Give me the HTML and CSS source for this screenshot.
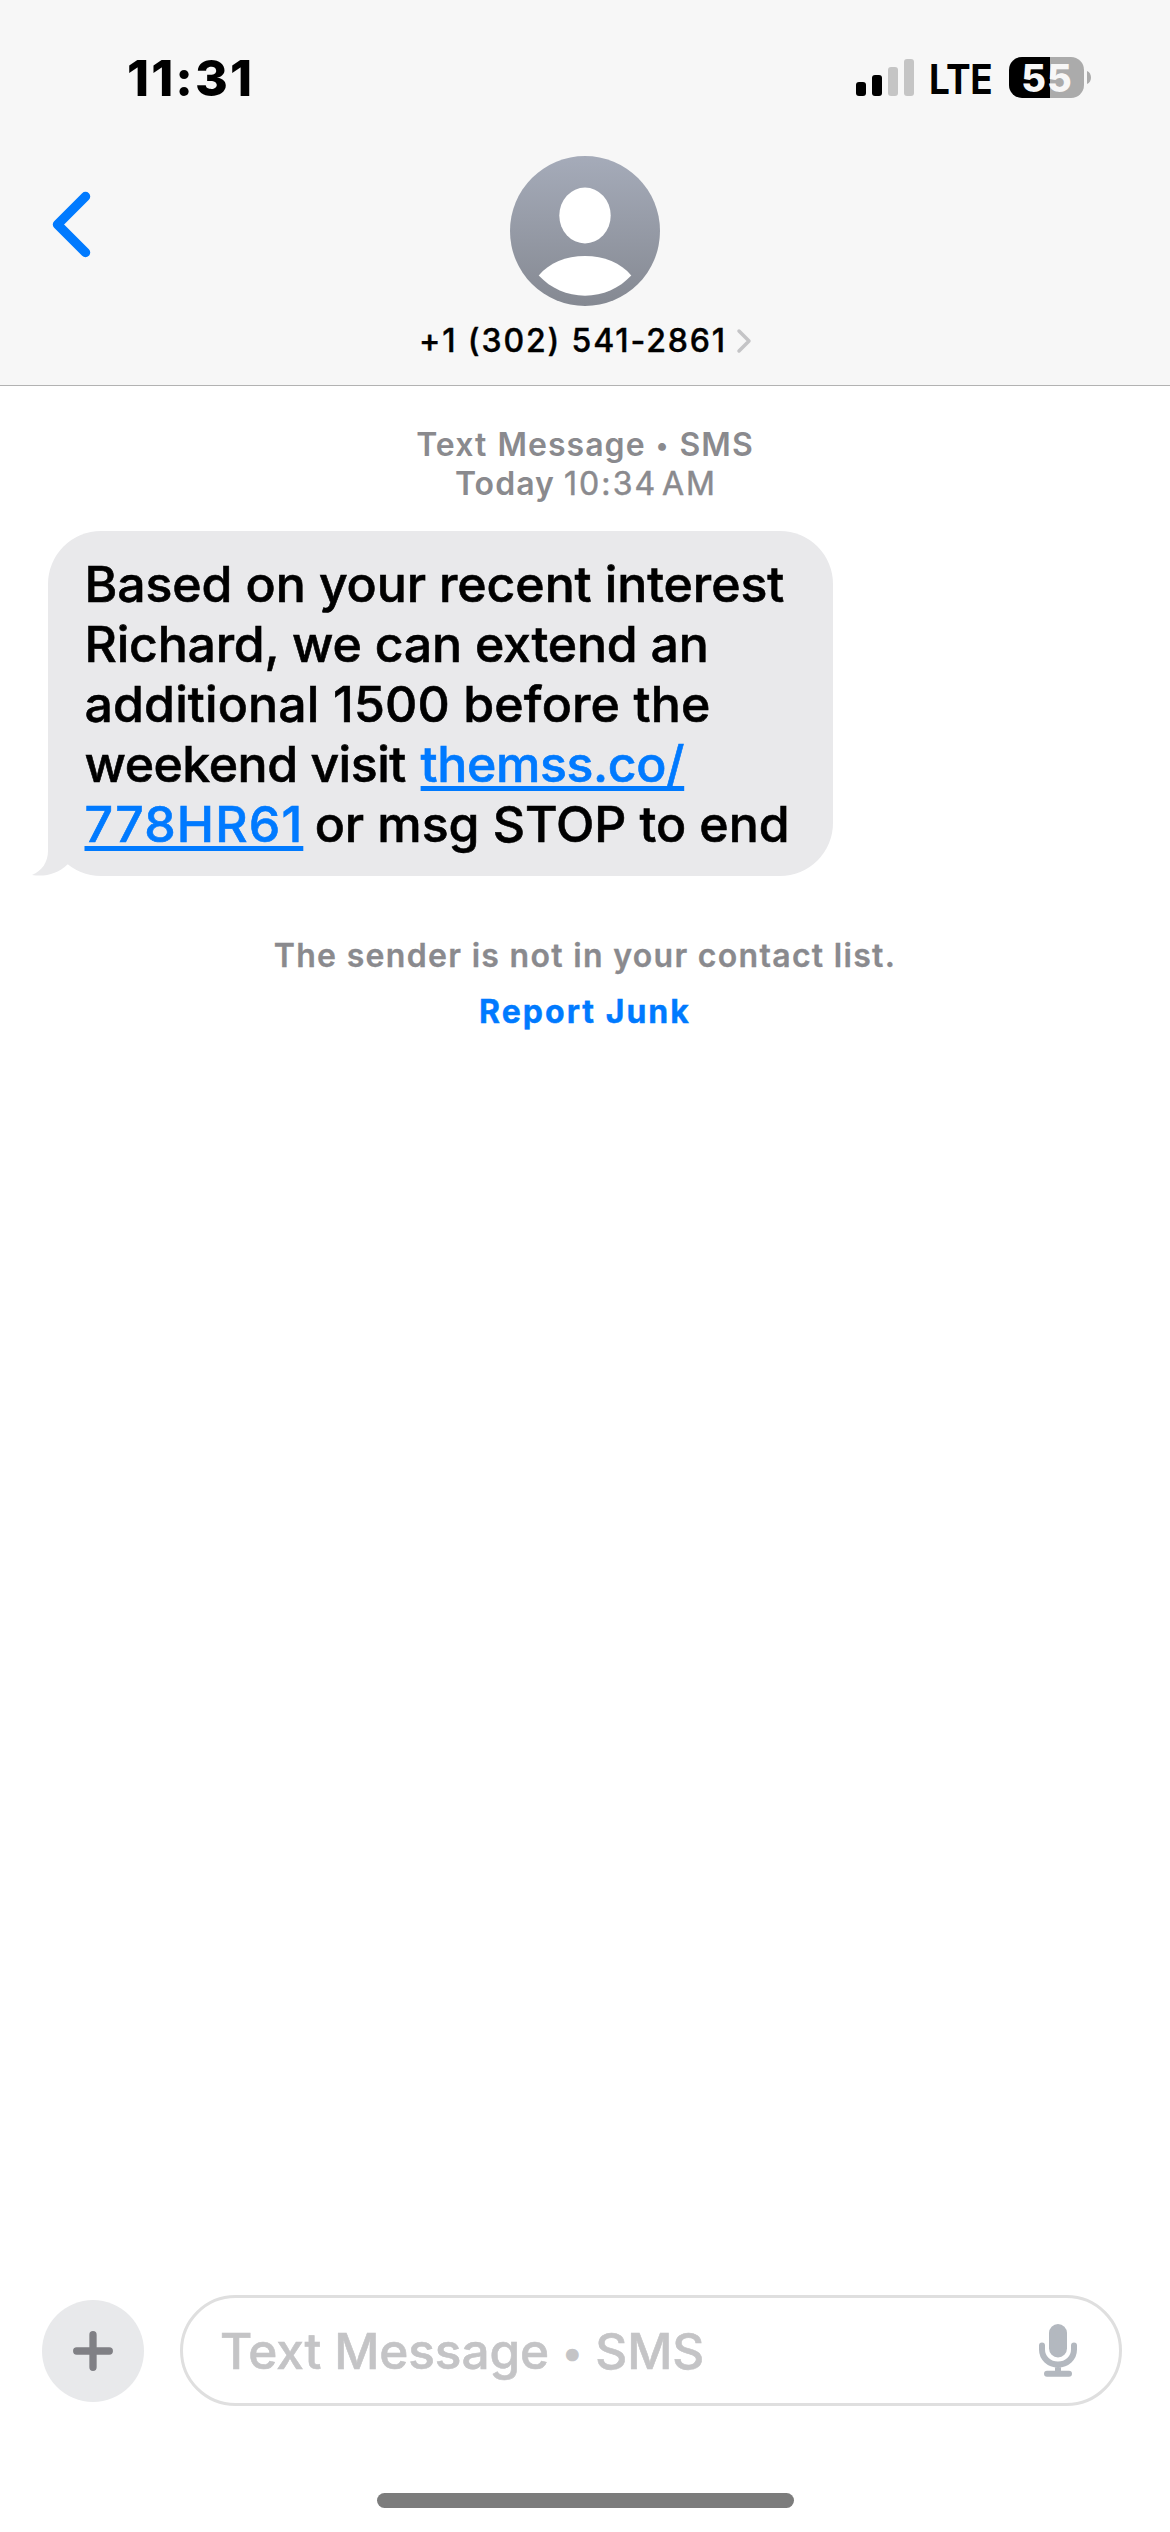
FILE: index.html
```html
<!DOCTYPE html>
<html lang="en">
<head>
<meta charset="utf-8">
<title>Messages</title>
<link rel="stylesheet" href="styles.css">
</head>
<body>
<div class="screen">
  <header class="header">
    <div class="status">
      <span class="time">11:31</span>
      <div class="indicators">
        <svg class="signal" viewBox="0 0 58 37"><g><rect y="23" width="10" height="14" rx="3"/><rect x="16" y="16" width="10" height="21" rx="3"/></g><g class="signal-off"><rect x="32" y="8" width="10" height="29" rx="3"/><rect x="48" width="10" height="37" rx="3"/></g></svg>
        <span class="network">LTE</span>
        <div class="battery"><span class="battery-level">55</span></div>
        <svg class="battery-tip" viewBox="0 0 4 13"><path d="M0 0C5.3 2 5.3 11 0 13Z"/></svg>
      </div>
    </div>
    <div class="contact-bar">
      <svg class="back" viewBox="0 0 40 68"><path d="M34.5 5.5 6.5 33.5 34.5 61.5"/></svg>
      <div class="contact">
        <svg class="avatar" viewBox="0 0 150 150">
          <defs><linearGradient id="avatar-fill" x1="0" y1="0" x2="0" y2="1"><stop offset="0" stop-color="#a5abb9"/><stop offset="1" stop-color="#858992"/></linearGradient></defs>
          <circle cx="75" cy="75" r="75" fill="url(#avatar-fill)"/>
          <ellipse cx="75" cy="59.5" rx="25.7" ry="28" fill="#fff"/>
          <path d="M28.7 119.5C39 107 56 100 75 100s36 7 46.300 19.500C109 132.500 93 139.700 75 139.700S41 132.500 28.700 119.500Z" fill="#fff"/>
        </svg>
        <div class="contact-name"><span class="number">+1 (302) 541-2861</span><svg class="disclosure" viewBox="0 0 14 24"><path d="M2 2 12 12 2 22"/></svg></div>
      </div>
    </div>
  </header>
  <main class="thread">
    <div class="stamp">
      <div class="stamp-service">Text Message <span class="dot">•</span> SMS</div>
      <div class="stamp-date"><b class="day">Today</b><span class="clock">10:34 AM</span></div>
    </div>
    <div class="bubble">
      <svg class="tail" viewBox="0 0 40 40"><path d="M16 -20V15C16 26 10 35 0 39C13 41 26 38 36 28L50 0Z"/></svg>
      <p class="message"><span class="line-1">Based on your recent interest</span><br><span class="line-2">Richard, we can extend an</span><br><span class="line-3">additional 1500 before the</span><br><span class="line-4">weekend visit</span> <a class="link link-host">themss.co/</a><br><a class="link link-path">778HR61</a> <span class="line-5">or msg STOP to end</span></p>
    </div>
    <div class="notice">The sender is not in your contact list.</div>
    <div class="report">Report Junk</div>
  </main>
  <footer class="composer">
    <div class="compose-row">
      <div class="add"><svg class="plus" viewBox="0 0 40 40"><path d="M20 3.700V36.300M3.700 20H36.300"/></svg></div>
      <div class="field">
        <span class="placeholder">Text Message <span class="dot">•</span> SMS</span>
        <svg class="mic" viewBox="0 0 38 53"><rect x="10" width="18" height="33.500" rx="9"/><path class="mic-line" d="M3 21.500V25.500C3 34 10 40.500 19 40.500S35 34 35 25.500V21.500M19 40.500V49M8 49.700H30"/></svg>
      </div>
    </div>
    <div class="home"></div>
  </footer>
</div>
</body>
</html>
```
FILE: styles.css
```css
* { box-sizing: border-box; }
body { margin: 0; background: #fff; color: #000; font-family: Inter, "Liberation Sans", sans-serif; }
svg { display: block; flex: none; overflow: visible; }
.screen { display: flex; flex-direction: column; width: 1170px; height: 2532px; overflow: hidden; }
.header { height: 386px; background: #f7f7f7; border-bottom: 1px solid #b2b2b2; }
.status { display: flex; justify-content: space-between; height: 156px; padding: 48px 79px 0 127px; }
.time { font-size: 50px; font-weight: 800; line-height: 60px; letter-spacing: 2.1px; }
.indicators { display: flex; align-items: flex-start; height: 60px; }
.signal { width: 58px; height: 37px; margin: 11px 15px 0 0; }
.signal-off { fill: #c5c5c5; }
.network { width: 80px; font-size: 41px; font-weight: 700; line-height: 62px; letter-spacing: -0.5px; transform: scaleX(.9); transform-origin: left; }
.battery { width: 75px; height: 41px; margin-top: 9px; border-radius: 13px; background: linear-gradient(90deg, #000 41px, #ababab 41px); text-align: center; color: #f7f7f7; }
.battery-level { font-size: 38px; font-weight: 800; line-height: 43px; letter-spacing: .8px; margin-right: -.8px; }
.battery-tip { width: 4px; height: 13px; margin: 23px 0 0 3px; fill: #ababab; }
.contact-bar { display: grid; grid-template-columns: 1fr auto 1fr; }
.back { width: 40px; height: 68px; margin: 35px 0 0 51px; fill: none; stroke: #007aff; stroke-width: 9.5px; stroke-linecap: round; stroke-linejoin: round; }
.contact { display: flex; flex-direction: column; align-items: center; }
.avatar { width: 150px; height: 150px; }
.contact-name { display: flex; align-items: center; gap: 10px; height: 40px; margin-top: 15px; }
.number { font-size: 32px; font-weight: 500; line-height: 40px; letter-spacing: 1.87px; white-space: nowrap; -webkit-text-stroke: .4px currentColor; }
.disclosure { width: 14px; height: 24px; fill: none; stroke: #c4c4c6; stroke-width: 3.5px; stroke-linecap: round; stroke-linejoin: round; }
.thread { flex: 1; }
.stamp { padding-top: 39px; color: #8a8a8e; font-size: 32px; font-weight: 600; line-height: 39px; letter-spacing: 1.05px; text-align: center; white-space: nowrap; }
.stamp-service { word-spacing: 1px; }
.dot { font-size: .78em; line-height: 0; vertical-align: .09em; }
.day { margin-right: 9px; font-weight: 600; }
.clock { margin-right: -2px; font-weight: 400; letter-spacing: 2.1px; word-spacing: -6.5px; -webkit-text-stroke: .5px currentColor; }
.bubble { position: relative; width: 785px; height: 345px; margin: 28px 0 0 48px; padding: 23px 0 0 36.5px; border-radius: 53px; background: #e9e9eb; }
.tail { position: absolute; left: -16px; bottom: 0; width: 40px; height: 40px; fill: #e9e9eb; }
.message { position: relative; margin: 0; font-size: 50px; font-weight: 500; line-height: 60px; white-space: nowrap; -webkit-text-stroke: .6px currentColor; }
.line-1 { letter-spacing: -.11px; }
.line-2 { letter-spacing: -.23px; }
.line-3 { letter-spacing: .14px; }
.line-4 { letter-spacing: -.5px; margin-right: 1.5px; }
.line-5 { letter-spacing: -.07px; margin-left: -2px; }
.link { color: #007aff; text-decoration: underline; text-decoration-thickness: 5px; text-underline-offset: 4px; }
.link-host { letter-spacing: -.39px; }
.link-path { letter-spacing: 1.15px; }
.notice { margin-top: 60px; color: #8a8a8e; font-size: 32px; font-weight: 600; line-height: 40px; letter-spacing: 1.31px; text-align: center; -webkit-text-stroke: .3px currentColor; }
.report { margin-top: 16px; color: #007aff; font-size: 32px; font-weight: 700; line-height: 40px; letter-spacing: 2.02px; text-align: center; -webkit-text-stroke: .4px currentColor; }
.composer { height: 237px; }
.compose-row { display: flex; align-items: center; gap: 36px; height: 111px; padding: 0 48px 0 42px; }
.add { display: grid; place-items: center; width: 102px; height: 102px; border-radius: 50%; background: #e8e9eb; }
.plus { width: 40px; height: 40px; fill: none; stroke: #808085; stroke-width: 7.3px; stroke-linecap: round; }
.field { display: flex; align-items: center; justify-content: space-between; flex: 1; height: 111px; padding: 0 42px 0 37px; border: 3px solid #dfdfdf; border-radius: 56px; }
.placeholder { color: #c4c4c6; font-size: 49.5px; font-weight: 500; line-height: 60px; letter-spacing: -.1px; word-spacing: -.2px; -webkit-text-stroke: .6px currentColor; }
.mic { width: 38px; height: 53px; fill: #b3b8bf; }
.mic-line { fill: none; stroke: #b3b8bf; stroke-width: 6px; stroke-linecap: round; }
.home { width: 417px; height: 15px; margin: 87px auto 0; border-radius: 8px; background: #7c7c7c; }
```
